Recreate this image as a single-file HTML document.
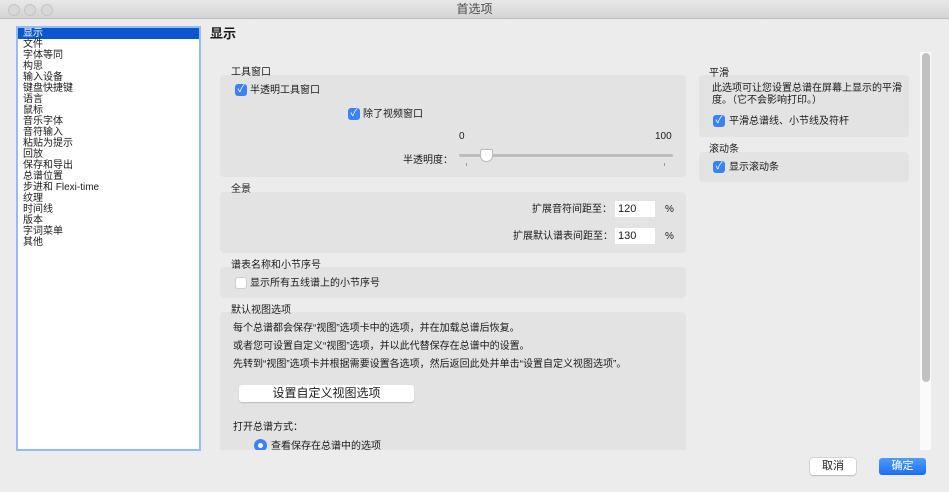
<!DOCTYPE html>
<html><head><meta charset="utf-8"><style>
*{margin:0;padding:0;box-sizing:border-box}
body{width:949px;height:492px;background:#ececec;font-family:"Liberation Sans","Noto Sans CJK SC",sans-serif;font-size:10px;line-height:13px;color:#1a1a1a;position:relative;overflow:hidden}
.a{position:absolute;white-space:nowrap}
.tb{left:0;top:0;width:949px;height:19px;background:linear-gradient(#e8e8e8,#d4d4d4);border-bottom:1px solid #bdbdbd;text-align:center;font-size:12px;line-height:19px;color:#4a4a4a}
.dot{top:4px;width:12px;height:12px;border-radius:50%;background:#d8d8d8;border:1px solid #c4c4c4}
.list{left:16px;top:26px;width:185px;height:425px;background:#fff;border:2px solid #95bdf3}
.list div{height:11px;line-height:12px;padding-left:5px;font-size:10px}
.list .sel{background:#0b57d0;color:#fff}
.box{background:#e3e3e3;border-radius:4px}
.cb{width:12px;height:12px;border-radius:3px;background:#3b82f6;color:#fff;font-size:10px;line-height:12px;text-align:center}
.cbe{width:12px;height:12px;border-radius:3px;background:#fff;border:1px solid #cfcfcf}
.inp{background:#fff;width:40px;height:16px;font-size:11px;line-height:16px;padding-left:3px}
</style></head><body>
<div class="a tb">首选项</div>
<div class="a dot" style="left:8px"></div><div class="a dot" style="left:24px"></div><div class="a dot" style="left:41px"></div>
<div class="a list">
<div class="sel">显示</div><div>文件</div><div>字体等同</div><div>构思</div><div>输入设备</div><div>键盘快捷键</div><div>语言</div><div>鼠标</div><div>音乐字体</div><div>音符输入</div><div>粘贴为提示</div><div>回放</div><div>保存和导出</div><div>总谱位置</div><div>步进和 Flexi-time</div><div>纹理</div><div>时间线</div><div>版本</div><div>字词菜单</div><div>其他</div>
</div>
<div class="a" style="left:210px;top:26px;font-size:13px;line-height:16px;font-weight:bold">显示</div>

<div class="a box" style="left:220px;top:75px;width:466px;height:102px"></div>
<div class="a" style="left:231px;top:66px">工具窗口</div>
<div class="a cb" style="left:235px;top:84px">✓</div><div class="a" style="left:250px;top:84px">半透明工具窗口</div>
<div class="a cb" style="left:348px;top:108px">✓</div><div class="a" style="left:363px;top:108px">除了视频窗口</div>
<div class="a" style="left:459px;top:130px">0</div><div class="a" style="left:655px;top:130px">100</div>
<div class="a" style="left:403px;top:154px">半透明度：</div>
<div class="a" style="left:459px;top:154px;width:214px;height:3px;background:#bdbdbd;border-radius:2px"></div>
<div class="a" style="left:480px;top:149px;width:13px;height:13px;background:#fff;border:1px solid #bbb;border-radius:2px 2px 6px 6px"></div>
<div class="a" style="left:466px;top:163px;width:1px;height:3px;background:#999"></div>
<div class="a" style="left:664px;top:163px;width:1px;height:3px;background:#999"></div>

<div class="a box" style="left:220px;top:192px;width:466px;height:61px"></div>
<div class="a" style="left:231px;top:183px">全景</div>
<div class="a" style="left:532px;top:203px">扩展音符间距至：</div>
<div class="a inp" style="left:615px;top:201px">120</div><div class="a" style="left:665px;top:203px">%</div>
<div class="a" style="left:513px;top:230px">扩展默认谱表间距至：</div>
<div class="a inp" style="left:615px;top:228px">130</div><div class="a" style="left:665px;top:230px">%</div>

<div class="a box" style="left:220px;top:267px;width:466px;height:31px"></div>
<div class="a" style="left:231px;top:259px">谱表名称和小节序号</div>
<div class="a cbe" style="left:235px;top:277px"></div><div class="a" style="left:250px;top:277px">显示所有五线谱上的小节序号</div>

<div class="a box" style="left:220px;top:312px;width:466px;height:138px;border-radius:4px 4px 0 0"></div>
<div class="a" style="left:231px;top:304px">默认视图选项</div>
<div class="a" style="left:233px;top:322px">每个总谱都会保存“视图”选项卡中的选项，并在加载总谱后恢复。</div>
<div class="a" style="left:233px;top:340px">或者您可设置自定义“视图”选项，并以此代替保存在总谱中的设置。</div>
<div class="a" style="left:233px;top:358px">先转到“视图”选项卡并根据需要设置各选项，然后返回此处并单击“设置自定义视图选项”。</div>
<div class="a" style="left:239px;top:385px;width:175px;height:17px;background:#fff;border-radius:3px;box-shadow:0 1px 1px #bbb;text-align:center;font-size:12px;line-height:17px">设置自定义视图选项</div>
<div class="a" style="left:233px;top:421px">打开总谱方式：</div>
<div class="a" style="left:254px;top:439px;width:13px;height:11px;overflow:hidden"><div style="width:13px;height:13px;border-radius:50%;background:#3b82f6;position:relative"><div style="position:absolute;left:4px;top:4px;width:5px;height:5px;border-radius:50%;background:#fff"></div></div></div>
<div class="a" style="left:271px;top:440px;height:10px;overflow:hidden">查看保存在总谱中的选项</div>

<div class="a box" style="left:699px;top:75px;width:210px;height:62px"></div>
<div class="a" style="left:709px;top:67px">平滑</div>
<div class="a" style="left:712px;top:83px;line-height:12px">此选项可让您设置总谱在屏幕上显示的平滑<br>度。（它不会影响打印。）</div>
<div class="a cb" style="left:713px;top:115px">✓</div><div class="a" style="left:729px;top:115px">平滑总谱线、小节线及符杆</div>
<div class="a box" style="left:699px;top:152px;width:210px;height:30px"></div>
<div class="a" style="left:709px;top:143px">滚动条</div>
<div class="a cb" style="left:713px;top:161px">✓</div><div class="a" style="left:729px;top:161px">显示滚动条</div>

<div class="a" style="left:920px;top:52px;width:11px;height:398px;background:#fafafa"></div>
<div class="a" style="left:922px;top:53px;width:8px;height:329px;background:#c1c1c1;border-radius:4px"></div>

<div class="a" style="left:810px;top:458px;width:46px;height:17px;background:#fff;border-radius:3px;box-shadow:0 0 0 0.5px #bbb,0 1px 1px #bbb;text-align:center;font-size:11px;line-height:17px">取消</div>
<div class="a" style="left:879px;top:458px;width:47px;height:17px;background:linear-gradient(#4e9bfb,#1a6ff0);border-radius:3px;color:#fff;text-align:center;font-size:11px;line-height:17px">确定</div>
</body></html>
